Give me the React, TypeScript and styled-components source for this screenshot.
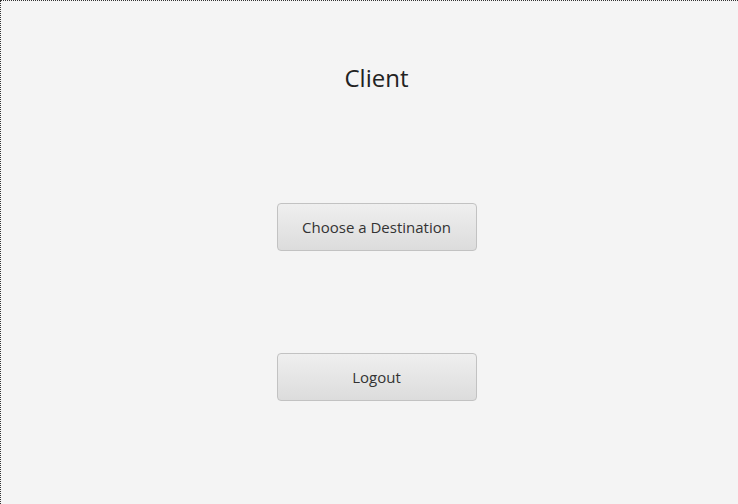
import styled, { createGlobalStyle } from "styled-components";

const GlobalStyle = createGlobalStyle`
  html, body {
    margin: 0;
    padding: 0;
    background: #f4f4f4;
  }
  body {
    font-family: "Open Sans", "Noto Sans", sans-serif;
  }
`;

const Window = styled.div`
  box-sizing: border-box;
  width: 738px;
  height: 504px;
  border-top: 1px dotted #333;
  border-left: 1px dotted #333;
  background: #f4f4f4;
  display: flex;
  flex-direction: column;
  align-items: center;
  padding-left: 14px;
  padding-top: 62px;
`;

const Title = styled.h1`
  margin: 0;
  font-size: 24px;
  font-weight: 400;
  color: #222;
  line-height: 30px;
`;

const Actions = styled.div`
  display: flex;
  flex-direction: column;
  gap: 102px;
  margin-top: 110px;
`;

const Button = styled.button`
  box-sizing: border-box;
  width: 200px;
  height: 48px;
  border: 1px solid #c2c2c2;
  border-radius: 4px;
  background: linear-gradient(#efefef, #dcdcdc);
  color: #333;
  font-family: "Open Sans", "Noto Sans", sans-serif;
  font-size: 15px;
  cursor: pointer;
  &:hover {
    background: linear-gradient(#f5f5f5, #e2e2e2);
  }
`;

export default function App() {
  return (
    <>
      <GlobalStyle />
      <Window>
        <Title>Client</Title>
        <Actions>
          <Button>Choose a Destination</Button>
          <Button>Logout</Button>
        </Actions>
      </Window>
    </>
  );
}
